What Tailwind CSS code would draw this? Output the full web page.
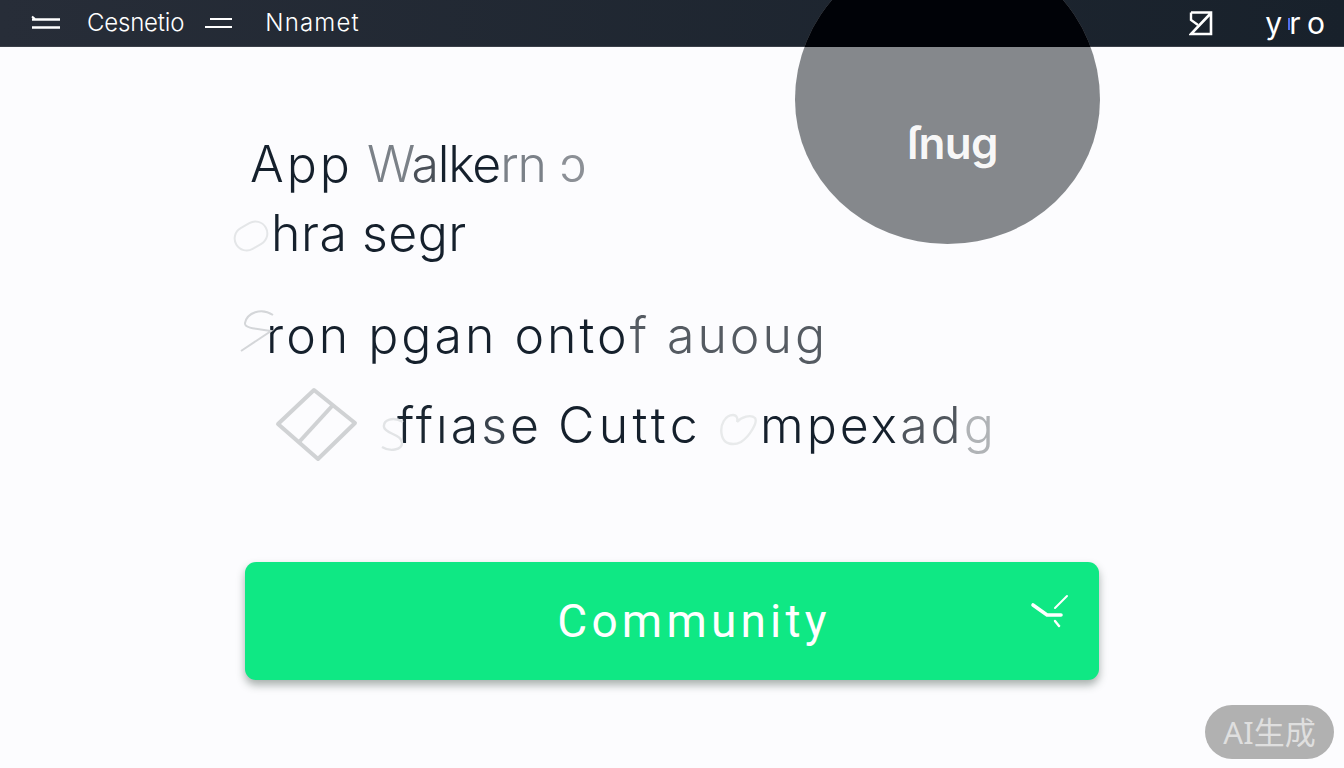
<!DOCTYPE html>
<html lang="en">
<head>
  <meta charset="UTF-8">
  <meta name="viewport" content="width=device-width, initial-scale=1.0">
  <title>App Walkern</title>
  <script src="https://cdn.jsdelivr.net/npm/@tailwindcss/browser@4"></script>
</head>
<body class="relative w-[1344px] h-[768px] overflow-hidden bg-[#fcfcfe] font-['Inter','Noto_Sans',sans-serif] text-[#15202c]">

  <!-- Top bar -->
  <header class="h-[47px] flex items-center bg-gradient-to-r from-[#272d38] to-[#18212b] text-white border-b border-[#3a3f48]">
    <svg class="ml-[30px] mb-[3px] w-[31px] h-[16px]" viewBox="0 0 31 16" fill="none" stroke="white" stroke-width="2.4">
      <path d="M2 5.5H30M2 13.5H30"/><path d="M2 2.5 5 5" stroke-width="2"/>
    </svg>
    <span class="ml-[26px] text-[24px] font-light leading-none tracking-[-0.2px]">Cesnetio</span>
    <svg class="ml-[20px] w-[29px] h-[14px]" viewBox="0 0 29 14" fill="none" stroke="white" stroke-width="2.2">
      <path d="M6 3H28M1 11H28"/>
    </svg>
    <span class="ml-[32px] text-[24px] font-light leading-none tracking-[1.2px]">Nnamet</span>

    <svg class="ml-auto w-[24px] h-[26px]" viewBox="0 0 24 26" fill="none" stroke="white" stroke-width="2.6">
      <path d="M2 2.5H22V24H2L22 3"/><path d="M2 2.5V10L9 15" stroke-width="2.4"/>
    </svg>
    <span class="relative ml-[52px] mr-[12px] text-[30px] leading-none tracking-[7px]">yro<span class="absolute left-[23px] top-[10px] w-[2px] h-[12px] bg-[#4f6ff0]"></span></span>
  </header>

  <!-- Circle over the bar -->
  <div class="absolute left-[795px] top-[-53px] w-[305px] h-[297px] rounded-[152.5px_152.5px_152.5px_152.5px/152.5px_152.5px_144.5px_144.5px] overflow-hidden bg-[#85888c]">
    <div class="h-[100px] bg-[#000207]"></div>
    <span class="absolute left-[112px] top-[166px] text-[44px] leading-[60px] font-semibold text-white/95 tracking-[-0.6px]">ſnug</span>
  </div>

  <main class="w-[854px] ml-[245px]">
    <h1 class="mt-[87px] pl-[5px] h-[60px] text-[50px] leading-[60px] font-light whitespace-nowrap">
      <span class="tracking-[3px]">App</span> <span class="tracking-[-1.2px]"><span class="text-[#7b8188]">W</span><span class="text-[#4a5058]">a</span>lke<span class="text-[#7b8188]">rn</span></span> <span class="text-[#8c9096]">ɔ</span>
    </h1>

    <div class="mt-[9px] relative pl-[26px] h-[60px] text-[50px] leading-[60px] font-light tracking-[0.5px] whitespace-nowrap">
      <span class="absolute left-[-12px] top-[20px] w-[36px] h-[26px] rounded-full border-2 border-[#e4e6e8] -rotate-[30deg]"></span>
      hra segr
    </div>

    <div class="mt-[42px] relative pl-[21px] h-[60px] text-[50px] leading-[60px] font-light tracking-[3px] whitespace-nowrap">
      <svg class="absolute left-[-6px] top-[2px] w-[44px] h-[50px]" viewBox="0 0 44 50" fill="none" stroke="#d4d6d9" stroke-width="2">
        <path d="M34 8C22 0 8 6 6 16c-1 6 16 6 26 8L2 44"/>
      </svg>
      ron pgan onto<span class="text-[#555b62]">f auoug</span>
    </div>

    <div class="mt-[20px] relative flex items-center h-[80px] whitespace-nowrap text-[50px] leading-[60px] font-light">
      <svg class="ml-[30px] w-[84px] h-[76px]" viewBox="0 0 84 76" fill="none" stroke="#d0d2d4" stroke-width="4" stroke-linejoin="round">
        <path d="M39 3 80 36 43 72 3 37Z"/><path d="M58 18 25 54"/>
      </svg>
      <svg class="absolute left-[134px] top-[32px] w-[28px] h-[36px]" viewBox="0 0 28 36" fill="none" stroke="#e2e4e6" stroke-width="2.4">
        <path d="M24 5C14-1 4 3 5 10c1 7 18 7 18 16 0 7-12 9-20 4"/>
      </svg>
      <span class="ml-[38px] text-[#1a2530] tracking-[3px]">ffıa<span class="text-[#3a434d]">s</span>e</span>
      <span class="ml-[16px] tracking-[4.4px]">Cuttc</span>
      <span class="ml-[58px] tracking-[3px]">mpex<span class="text-[#50565d]">ad</span><span class="text-[#b0b3b6]">g</span></span>
      <svg class="absolute left-[473px] top-[27px] w-[40px] h-[36px]" viewBox="0 0 40 36" fill="none" stroke="#e8eaeb" stroke-width="2.4">
        <path d="M4 24C1 12 8 3 15 3c4 0 5 4 4 7 4-5 14-8 18-4 3 4-5 18-14 24-8 4-17 2-19-6Z"/>
      </svg>
    </div>

    <button class="mt-[97px] relative w-full h-[118px] rounded-[11px] bg-[#0fe884] shadow-[0_5px_9px_rgba(40,60,50,0.4)] text-white">
      <span class="block pl-[44px] text-[46px] leading-none font-['Roboto',sans-serif] tracking-[4.2px]">Community</span>
      <svg class="absolute left-[784px] top-[32px] w-[44px] h-[40px]" viewBox="0 0 44 40" fill="none" stroke="white" stroke-linecap="round">
        <path d="M4 11 18 21H32" stroke-width="3.6"/><path d="M26 14 38 2" stroke-width="2"/><path d="M26 27 30 32" stroke-width="2.4"/>
      </svg>
    </button>
  </main>

  <!-- Watermark -->
  <div class="absolute left-[1205px] top-[705px] w-[129px] h-[54px] rounded-full bg-[#b1b1b1] flex items-center justify-center text-[31px] text-white/60 font-['Noto_Sans','Noto_Sans_CJK_SC',sans-serif]">AI生成</div>
</body>
</html>
